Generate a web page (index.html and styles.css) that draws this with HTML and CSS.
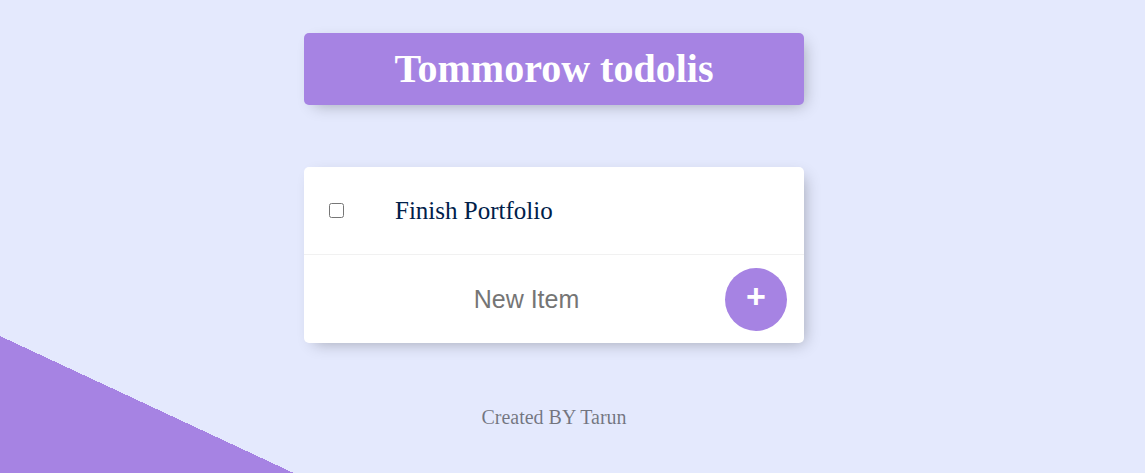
FILE: index.html
```html
<!DOCTYPE html>
<html lang="en">
<head>
<meta charset="utf-8">
<title>To Do List</title>
<link rel="stylesheet" href="styles.css">
</head>
<body>
<div class="page">
  <div class="box heading">
    <h1 class="title">Tommorow todolis</h1>
  </div>
  <div class="box card">
    <div class="item">
      <input class="check" type="checkbox">
      <p class="item-text">Finish Portfolio</p>
    </div>
    <form class="item new-item">
      <input class="new-input" type="text" name="newItem" placeholder="New Item" autocomplete="off">
      <button class="add-btn" type="button">+</button>
    </form>
  </div>
  <footer class="footer">Created BY Tarun</footer>
</div>
</body>
</html>
```

FILE: styles.css
```css
html {
  background-color: #E4E9FD;
  background-image: linear-gradient(25deg, #A683E3 50%, #E4E9FD 50%);
  background-repeat: no-repeat;
  background-size: 1145px 1206px;
  background-position: 0 0;
}

body {
  margin: 0;
  font-family: "Liberation Serif", "Times New Roman", serif;
}

.page {
  width: 1108px;
  display: flex;
  flex-direction: column;
  align-items: center;
  padding-top: 33px;
}

.box {
  width: 500px;
  background: #ffffff;
  border-radius: 5px;
  box-shadow: 5px 5px 15px -5px rgba(0, 0, 0, 0.3);
}

.heading {
  background-color: #A683E3;
  height: 72px;
  display: flex;
  align-items: center;
  justify-content: center;
}

.title {
  margin: 0;
  color: #ffffff;
  font-size: 40px;
  font-weight: bold;
  line-height: 1;
}

.card {
  margin-top: 62px;
}

.item {
  height: 88px;
  display: flex;
  align-items: center;
  border-bottom: 1px solid #F1F1F1;
  box-sizing: border-box;
}

.item:last-child {
  border-bottom: 0;
  height: 88px;
}

.check {
  margin: 0 0 0 25px;
  width: 15px;
  height: 15px;
}

.item-text {
  margin: 0 0 0 51px;
  font-size: 25px;
  color: #00204a;
}

.new-item {
  margin: 0;
  padding: 0 17px 0 20px;
}

.new-input {
  flex: 1;
  min-width: 0;
  height: 60px;
  border: none;
  outline: none;
  text-align: center;
  padding: 0 0 0 4px;
  font-family: "Liberation Sans", Arial, sans-serif;
  font-size: 25px;
  background: transparent;
}

.new-input::placeholder {
  color: #757575;
}

.add-btn {
  width: 62px;
  height: 63px;
  border-radius: 50%;
  border: 0;
  background-color: #A683E3;
  color: #ffffff;
  font-family: "Liberation Sans", Arial, sans-serif;
  font-size: 34px;
  font-weight: bold;
  padding: 0 0 6px 0;
  line-height: 1;
}

.footer {
  margin-top: 63px;
  font-size: 20px;
  color: rgba(0, 0, 0, 0.5);
  text-align: center;
}
```
